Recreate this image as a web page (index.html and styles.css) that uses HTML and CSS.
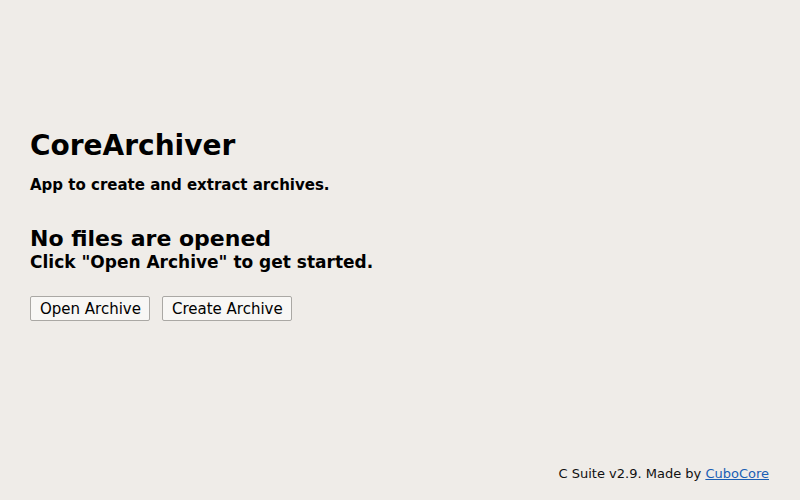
FILE: index.html
```html
<!DOCTYPE html>
<html>
<head>
<meta charset="utf-8">
<link rel="stylesheet" href="styles.css">
</head>
<body>
<div class="page">
  <main class="main">
    <h1 class="title">CoreArchiver</h1>
    <p class="subtitle">App to create and extract archives.</p>
    <h2 class="empty-title">No files are opened</h2>
    <p class="empty-hint">Click "Open Archive" to get started.</p>
    <div class="actions">
      <button class="btn">Open Archive</button>
      <button class="btn">Create Archive</button>
    </div>
  </main>
  <footer class="footer">C Suite v2.9. Made by <a href="#" class="link">CuboCore</a></footer>
</div>
</body>
</html>
```
FILE: styles.css
```css
html, body {
  margin: 0;
  padding: 0;
  height: 100%;
  background: #efece8;
  font-family: "DejaVu Sans", sans-serif;
  color: #000;
}
.page {
  height: 100%;
  box-sizing: border-box;
  display: flex;
  flex-direction: column;
  padding: 0 31px 0 30px;
}
.main {
  flex: 1;
  display: flex;
  flex-direction: column;
  justify-content: center;
  padding-bottom: 16px;
}
.title {
  font-size: 28px;
  font-weight: bold;
  margin: 0;
  line-height: 34px;
}
.subtitle {
  font-size: 15px;
  font-weight: bold;
  margin: 12px 0 0;
  line-height: 20px;
}
.empty-title {
  font-size: 22px;
  font-weight: bold;
  margin: 31px 0 0;
  line-height: 26px;
}
.empty-hint {
  font-size: 17px;
  font-weight: bold;
  margin: 0;
  line-height: 21px;
}
.actions {
  display: flex;
  gap: 12px;
  margin-top: 23px;
}
.btn {
  font-family: "DejaVu Sans", sans-serif;
  font-size: 15px;
  height: 25px;
  padding: 0 8px 0 9px;
  background: #f8f7f5;
  border: 1px solid #aaa8a4;
  border-radius: 2px;
  color: #000;
}
.footer {
  align-self: flex-end;
  font-size: 13px;
  color: #111;
  padding-bottom: 19px;
}
.link {
  color: #1a5fb4;
}
```
